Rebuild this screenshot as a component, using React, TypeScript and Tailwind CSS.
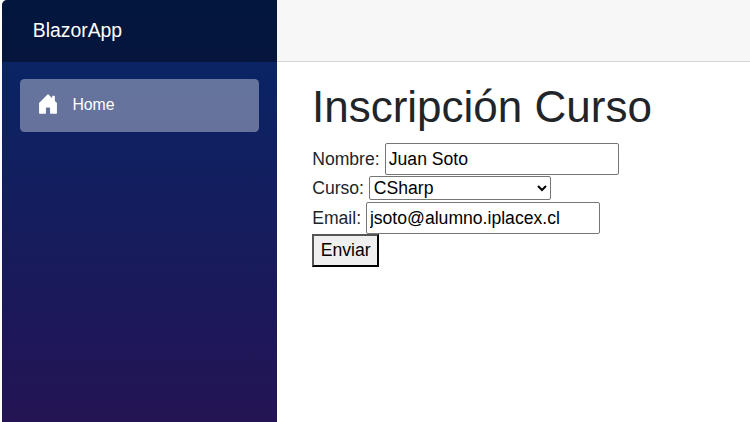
import React from "react";

function HouseIcon() {
  return (
    <svg viewBox="0 0 16 16" fill="currentColor" className="mr-[13.2px] mb-[3px] size-[22px] shrink-0" aria-hidden="true">
      <path d="M6.5 14.5v-3.505c0-.245.25-.495.5-.495h2c.25 0 .5.25.5.5v3.5a.5.5 0 0 0 .5.5h4a.5.5 0 0 0 .5-.5v-7a.5.5 0 0 0-.146-.354L13 5.793V2.5a.5.5 0 0 0-.5-.5h-1a.5.5 0 0 0-.5.5v1.293L8.354 1.146a.5.5 0 0 0-.708 0l-6 6A.5.5 0 0 0 1.5 7.5v7a.5.5 0 0 0 .5.5h4a.5.5 0 0 0 .5-.5Z" />
    </svg>
  );
}

function Sidebar() {
  return (
    <aside className="w-[275px] shrink-0 overflow-hidden rounded-tl-[5px] bg-[linear-gradient(180deg,rgb(5,39,103)_0px,#3a0647_721px)]">
      <div className="flex h-[61.6px] items-center bg-black/40 pl-[30.8px]">
        <a href="#" className="text-[19.36px] text-white">BlazorApp</a>
      </div>
      <nav className="px-[17.6px] pt-[17.6px]">
        <a href="#" className="flex h-[52.8px] items-center rounded-[4.4px] bg-white/37 pl-[17.6px] text-[15.84px] text-white">
          <HouseIcon />
          <span className="mb-0.5">Home</span>
        </a>
      </nav>
    </aside>
  );
}

function CourseForm() {
  return (
    <form className="text-[17.6px] leading-[26.4px]" onSubmit={(e) => e.preventDefault()}>
      <div className="flex h-8 items-center">
        <label htmlFor="nombre" className="w-[72.6px]">Nombre:</label>
        <input id="nombre" defaultValue="Juan Soto" className="h-8 w-[234px] rounded-[2px] border border-[#767676] bg-white px-[3px] text-black" />
      </div>
      <div className="mt-px flex h-6 items-center">
        <label htmlFor="curso" className="w-[56.6px]">Curso:</label>
        <select id="curso" className="h-6 w-[182px] rounded-[2px] border border-[#767676] bg-white text-black">
          <option>CSharp</option>
        </select>
      </div>
      <div className="mt-0.5 flex h-8 items-center">
        <label htmlFor="email" className="w-[53.7px]">Email:</label>
        <input id="email" defaultValue="jsoto@alumno.iplacex.cl" className="h-8 w-[234px] rounded-[2px] border border-[#767676] bg-white px-[3px] text-black" />
      </div>
      <button className="block h-[33px] w-[67px] border-2 border-black border-t-[#555] border-l-[#555] bg-[#efefef] text-center text-black">
        Enviar
      </button>
    </form>
  );
}

export default function App() {
  return (
    <div className="flex h-screen overflow-hidden bg-white pl-0.5 font-['Liberation_Sans',sans-serif] text-[#212529]">
      <Sidebar />
      <main className="min-w-0 flex-1">
        <div className="h-[62px] border-b border-[#d6d5d5] bg-[#f7f7f7]" />
        <article className="pt-[18px] pl-[35.2px]">
          <h1 className="-ml-[0.2px] mb-[10px] h-[53px] text-[44px] leading-[53px] font-medium whitespace-nowrap">Inscripción Curso</h1>
          <CourseForm />
        </article>
      </main>
    </div>
  );
}
